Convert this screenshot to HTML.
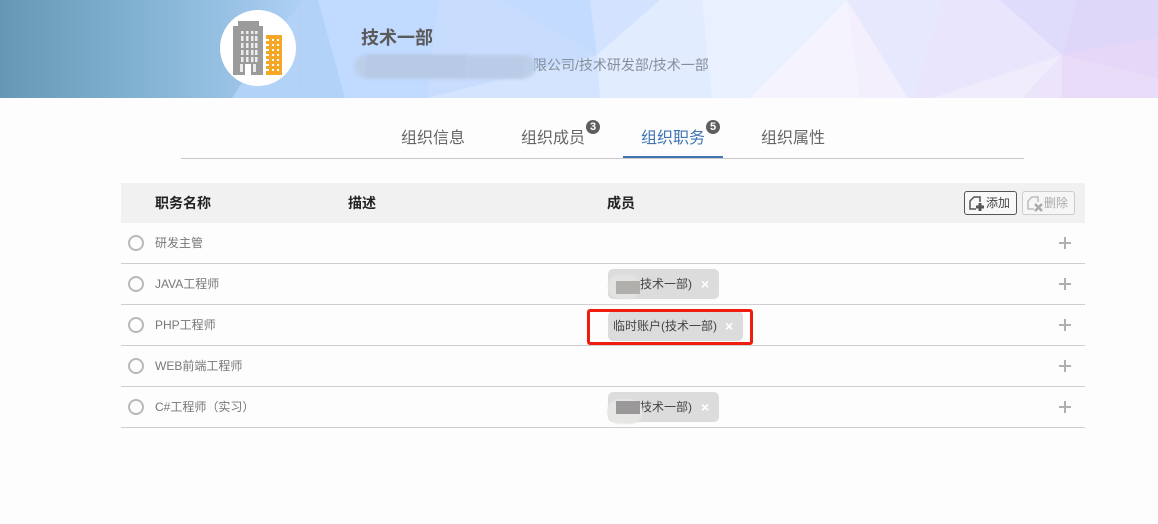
<!DOCTYPE html>
<html lang="zh">
<head>
<meta charset="utf-8">
<style>
html,body{margin:0;padding:0;width:1158px;height:524px;overflow:hidden;background:#fdfdfd;}
body{position:relative;font-family:"Liberation Sans","Noto Sans CJK SC",sans-serif;color:#666;}
.a{position:absolute;white-space:nowrap;}
.tab{position:absolute;top:128px;font-size:16px;line-height:22px;color:#666;white-space:nowrap;}
.badge{position:absolute;top:120px;width:14px;height:14px;border-radius:50%;background:#5f5f5f;color:#fff;font-size:11px;font-weight:bold;line-height:14px;text-align:center;}
.th{position:absolute;top:193px;font-size:14px;line-height:20px;font-weight:bold;color:#222;white-space:nowrap;}
.line{position:absolute;left:121px;width:964px;height:1px;background:#cfcfcf;}
.radio{position:absolute;left:128px;width:12px;height:12px;border:2px solid #b9b9b9;border-radius:50%;}
.name{position:absolute;left:155px;font-size:12px;line-height:18px;color:#777;white-space:nowrap;}
.plus{position:absolute;left:1059px;width:12px;height:12px;}
.plus:before{content:"";position:absolute;left:0;top:5px;width:12px;height:2px;background:#b0b0b0;}
.plus:after{content:"";position:absolute;left:5px;top:0;width:2px;height:12px;background:#b0b0b0;}
.chip{position:absolute;height:30px;background:#dcdcdc;border-radius:5px;font-size:12px;line-height:30px;color:#444;white-space:nowrap;}
.x{position:absolute;top:0;font-size:14px;font-weight:bold;color:#fff;line-height:30px;}
.blot{position:absolute;background:#a3a1a1;}
.btn{position:absolute;top:191px;height:24px;border-radius:3px;box-sizing:border-box;font-size:12px;line-height:23px;}
</style>
</head>
<body>
<svg class="a" style="left:0;top:0" width="1158" height="98" viewBox="0 0 1158 98">
<defs><linearGradient id="g" x1="0" y1="0" x2="1158" y2="0" gradientUnits="userSpaceOnUse">
<stop offset="0" stop-color="#6697b4"/>
<stop offset=".11" stop-color="#7fb0cf"/>
<stop offset=".2" stop-color="#99c2e5"/>
<stop offset=".26" stop-color="#aed0f5"/>
<stop offset=".39" stop-color="#c2daff"/>
<stop offset=".53" stop-color="#d8e6ff"/>
<stop offset=".65" stop-color="#e9f0ff"/>
<stop offset=".73" stop-color="#f3f2fe"/>
<stop offset=".82" stop-color="#e8e8fd"/>
<stop offset=".92" stop-color="#e4defb"/>
<stop offset="1" stop-color="#e6d8f8"/>
</linearGradient></defs>
<rect width="1158" height="98" fill="url(#g)"/>
<polygon points="303,0 318,0 345,98 232,98 265,47" fill="#b3d2f8"/>
<polygon points="318,0 438,0 427,98 345,98" fill="#c1daff"/>
<polygon points="438,0 590,0 600,98 427,98" fill="#c8dcfe"/>
<polygon points="500,0 590,0 597,55" fill="#c3dbff"/>
<polygon points="590,0 660,0 597,55" fill="#d3e3ff"/>
<polygon points="597,55 660,0 702,0 712,98 600,98" fill="#e2ecff"/>
<polygon points="427,98 597,55 600,98" fill="#d4e3fe"/>
<polygon points="702,0 847,0 750,98 712,98" fill="#e9f0ff"/>
<polygon points="847,0 750,98 866,98" fill="#f4f3fe"/>
<polygon points="847,0 908,98 860,98" fill="#f3effd"/>
<polygon points="847,0 942,0 913,98 908,98" fill="#e6e9fe"/>
<polygon points="942,0 1000,0 1062,55 933,98 913,98" fill="#e9e5fc"/>
<polygon points="1062,55 933,98 1022,98" fill="#f0ecfc"/>
<polygon points="1062,55 1022,98 1062,98" fill="#ece4fb"/>
<polygon points="1000,0 1077,0 1062,55" fill="#dedbfb"/>
<polygon points="1077,0 1158,0 1158,37 1062,55" fill="#dfd7f9"/>
<polygon points="1062,55 1158,37 1158,78" fill="#e6d6f8"/>
<polygon points="1062,55 1158,78 1158,98 1062,98" fill="#e8dcf9"/>
</svg>
<div class="a" style="left:299px;top:10px;width:1px;height:78px;background:rgba(200,190,190,.3)"></div>
<div class="a" style="left:220px;top:10px;width:76px;height:76px;border-radius:50%;background:#fff"></div>
<svg class="a" style="left:220px;top:10px" width="76" height="76" viewBox="0 0 76 76">
<path d="M13 16H18V11H39V16H43V65H31V54H25V65H13Z" fill="#9b9b9b"/>
<g fill="#ececec">
<rect x="21" y="21" width="2.5" height="3"/><rect x="26" y="21" width="2.5" height="3"/><rect x="31" y="21" width="2.5" height="3"/><rect x="35" y="21" width="2.5" height="3"/>
<rect x="21" y="26" width="2.5" height="5"/><rect x="26" y="26" width="2.5" height="5"/><rect x="31" y="26" width="2.5" height="5"/><rect x="35" y="26" width="2.5" height="5"/>
<rect x="21" y="33" width="2.5" height="5"/><rect x="26" y="33" width="2.5" height="5"/><rect x="31" y="33" width="2.5" height="5"/><rect x="35" y="33" width="2.5" height="5"/>
<rect x="21" y="40" width="2.5" height="5"/><rect x="26" y="40" width="2.5" height="5"/><rect x="31" y="40" width="2.5" height="5"/><rect x="35" y="40" width="2.5" height="5"/>
<rect x="21" y="47" width="2.5" height="5"/><rect x="26" y="47" width="2.5" height="5"/><rect x="31" y="47" width="2.5" height="5"/><rect x="35" y="47" width="2.5" height="5"/>
<rect x="20" y="54" width="3" height="8"/><rect x="33" y="54" width="3" height="8"/>
</g>
<rect x="46" y="25" width="16" height="40" fill="#f6a726"/>
<g fill="#fff">
<rect x="46" y="29" width="3" height="2"/><rect x="52" y="29" width="2" height="2"/><rect x="57" y="29" width="2" height="2"/>
<rect x="46" y="34" width="3" height="2"/><rect x="52" y="34" width="2" height="2"/><rect x="57" y="34" width="2" height="2"/>
<rect x="46" y="39" width="3" height="2"/><rect x="52" y="39" width="2" height="2"/><rect x="57" y="39" width="2" height="2"/>
<rect x="46" y="44" width="3" height="2"/><rect x="52" y="44" width="2" height="2"/><rect x="57" y="44" width="2" height="2"/>
<rect x="46" y="49" width="3" height="2"/><rect x="52" y="49" width="2" height="2"/><rect x="57" y="49" width="2" height="2"/>
<rect x="46" y="54" width="3" height="2"/><rect x="52" y="54" width="2" height="2"/><rect x="57" y="54" width="2" height="2"/>
<rect x="46" y="59" width="3" height="2"/><rect x="52" y="59" width="2" height="2"/><rect x="57" y="59" width="2" height="2"/>
</g>
</svg>
<div class="a" style="left:361px;top:25px;font-size:18px;line-height:26px;font-weight:bold;color:#5a5a5a">技术一部</div>
<div class="a" style="left:533px;top:55px;font-size:14px;line-height:20px;color:#858f9c">限公司/技术研发部/技术一部</div>
<div class="a" style="left:354px;top:55px;width:182px;height:23px;border-radius:12px;background:#bccfe9;filter:blur(1.5px)"></div>
<div class="a" style="left:366px;top:55px;width:100px;height:23px;background:#b7c9e5;filter:blur(1.5px)"></div>
<div class="a" style="left:466px;top:57px;width:58px;height:21px;background:#b9cbe7;filter:blur(1.5px)"></div>

<div class="tab" style="left:401px">组织信息</div>
<div class="tab" style="left:521px">组织成员</div>
<div class="tab" style="left:641px;color:#3f74b5">组织职务</div>
<div class="tab" style="left:761px">组织属性</div>
<div class="badge" style="left:586px">3</div>
<div class="badge" style="left:706px">5</div>
<div class="a" style="left:181px;top:158px;width:843px;height:1px;background:#c9c9c9"></div>
<div class="a" style="left:623px;top:156px;width:100px;height:2px;background:#3f74b5"></div>

<div class="a" style="left:121px;top:183px;width:964px;height:40px;background:#f1f1f1"></div>
<div class="th" style="left:155px">职务名称</div>
<div class="th" style="left:348px">描述</div>
<div class="th" style="left:607px">成员</div>

<div class="btn" style="left:964px;width:53px;border:1px solid #555;color:#444;background:#f8f8f8">
<svg class="a" style="left:3px;top:2px" width="20" height="20" viewBox="0 0 20 20"><path d="M8 15H2V7L6 3H12V8" fill="none" stroke="#555" stroke-width="1.5"/><path d="M8 13H16M12 9V17" stroke="#555" stroke-width="3"/></svg>
<span class="a" style="left:21px;top:0">添加</span></div>
<div class="btn" style="left:1022px;width:53px;border:1px solid #ccc;color:#aaa;background:#f6f6f6">
<svg class="a" style="left:3px;top:2px" width="20" height="20" viewBox="0 0 20 20"><path d="M8 15H2V7L6 3H12V8" fill="none" stroke="#bbb" stroke-width="1.5"/><path d="M9 10L16 17M16 10L9 17" stroke="#aaa" stroke-width="2.6"/></svg>
<span class="a" style="left:21px;top:0">删除</span></div>

<div class="radio" style="top:235px"></div><div class="name" style="top:234px">研发主管</div><div class="plus" style="top:237px"></div>
<div class="line" style="top:263px"></div>
<div class="radio" style="top:276px"></div><div class="name" style="top:275px">JAVA工程师</div><div class="plus" style="top:278px"></div>
<div class="line" style="top:304px"></div>
<div class="radio" style="top:317px"></div><div class="name" style="top:316px">PHP工程师</div><div class="plus" style="top:319px"></div>
<div class="line" style="top:345px"></div>
<div class="radio" style="top:358px"></div><div class="name" style="top:357px">WEB前端工程师</div><div class="plus" style="top:360px"></div>
<div class="line" style="top:386px"></div>
<div class="radio" style="top:399px"></div><div class="name" style="top:398px">C#工程师（实习）</div><div class="plus" style="top:401px"></div>
<div class="line" style="top:427px"></div>

<div class="chip" style="left:608px;top:269px;width:111px"><span class="a" style="left:32px;top:0">技术一部)</span><span class="x" style="left:93px">×</span></div>
<div class="a" style="left:608px;top:274px;width:32px;height:25px;border-radius:14px;background:#e3e3e1;filter:blur(.8px)"></div>
<div class="blot" style="left:616px;top:281px;width:24px;height:13px;background:#b1afab"></div>

<div class="chip" style="left:608px;top:311px;width:135px"><span class="a" style="left:5px;top:0">临时账户(技术一部)</span><span class="x" style="left:117px">×</span></div>
<div class="a" style="left:587px;top:309px;width:160px;height:30px;border:3px solid #f01c10;border-radius:3px"></div>

<div class="chip" style="left:608px;top:392px;width:111px"><span class="a" style="left:32px;top:0">技术一部)</span><span class="x" style="left:93px">×</span></div>
<div class="a" style="left:607px;top:399px;width:36px;height:25px;border-radius:14px;background:#e6e6e4;filter:blur(.8px)"></div>
<div class="blot" style="left:616px;top:401px;width:24px;height:13px;background:#9a9899"></div>
</body>
</html>
